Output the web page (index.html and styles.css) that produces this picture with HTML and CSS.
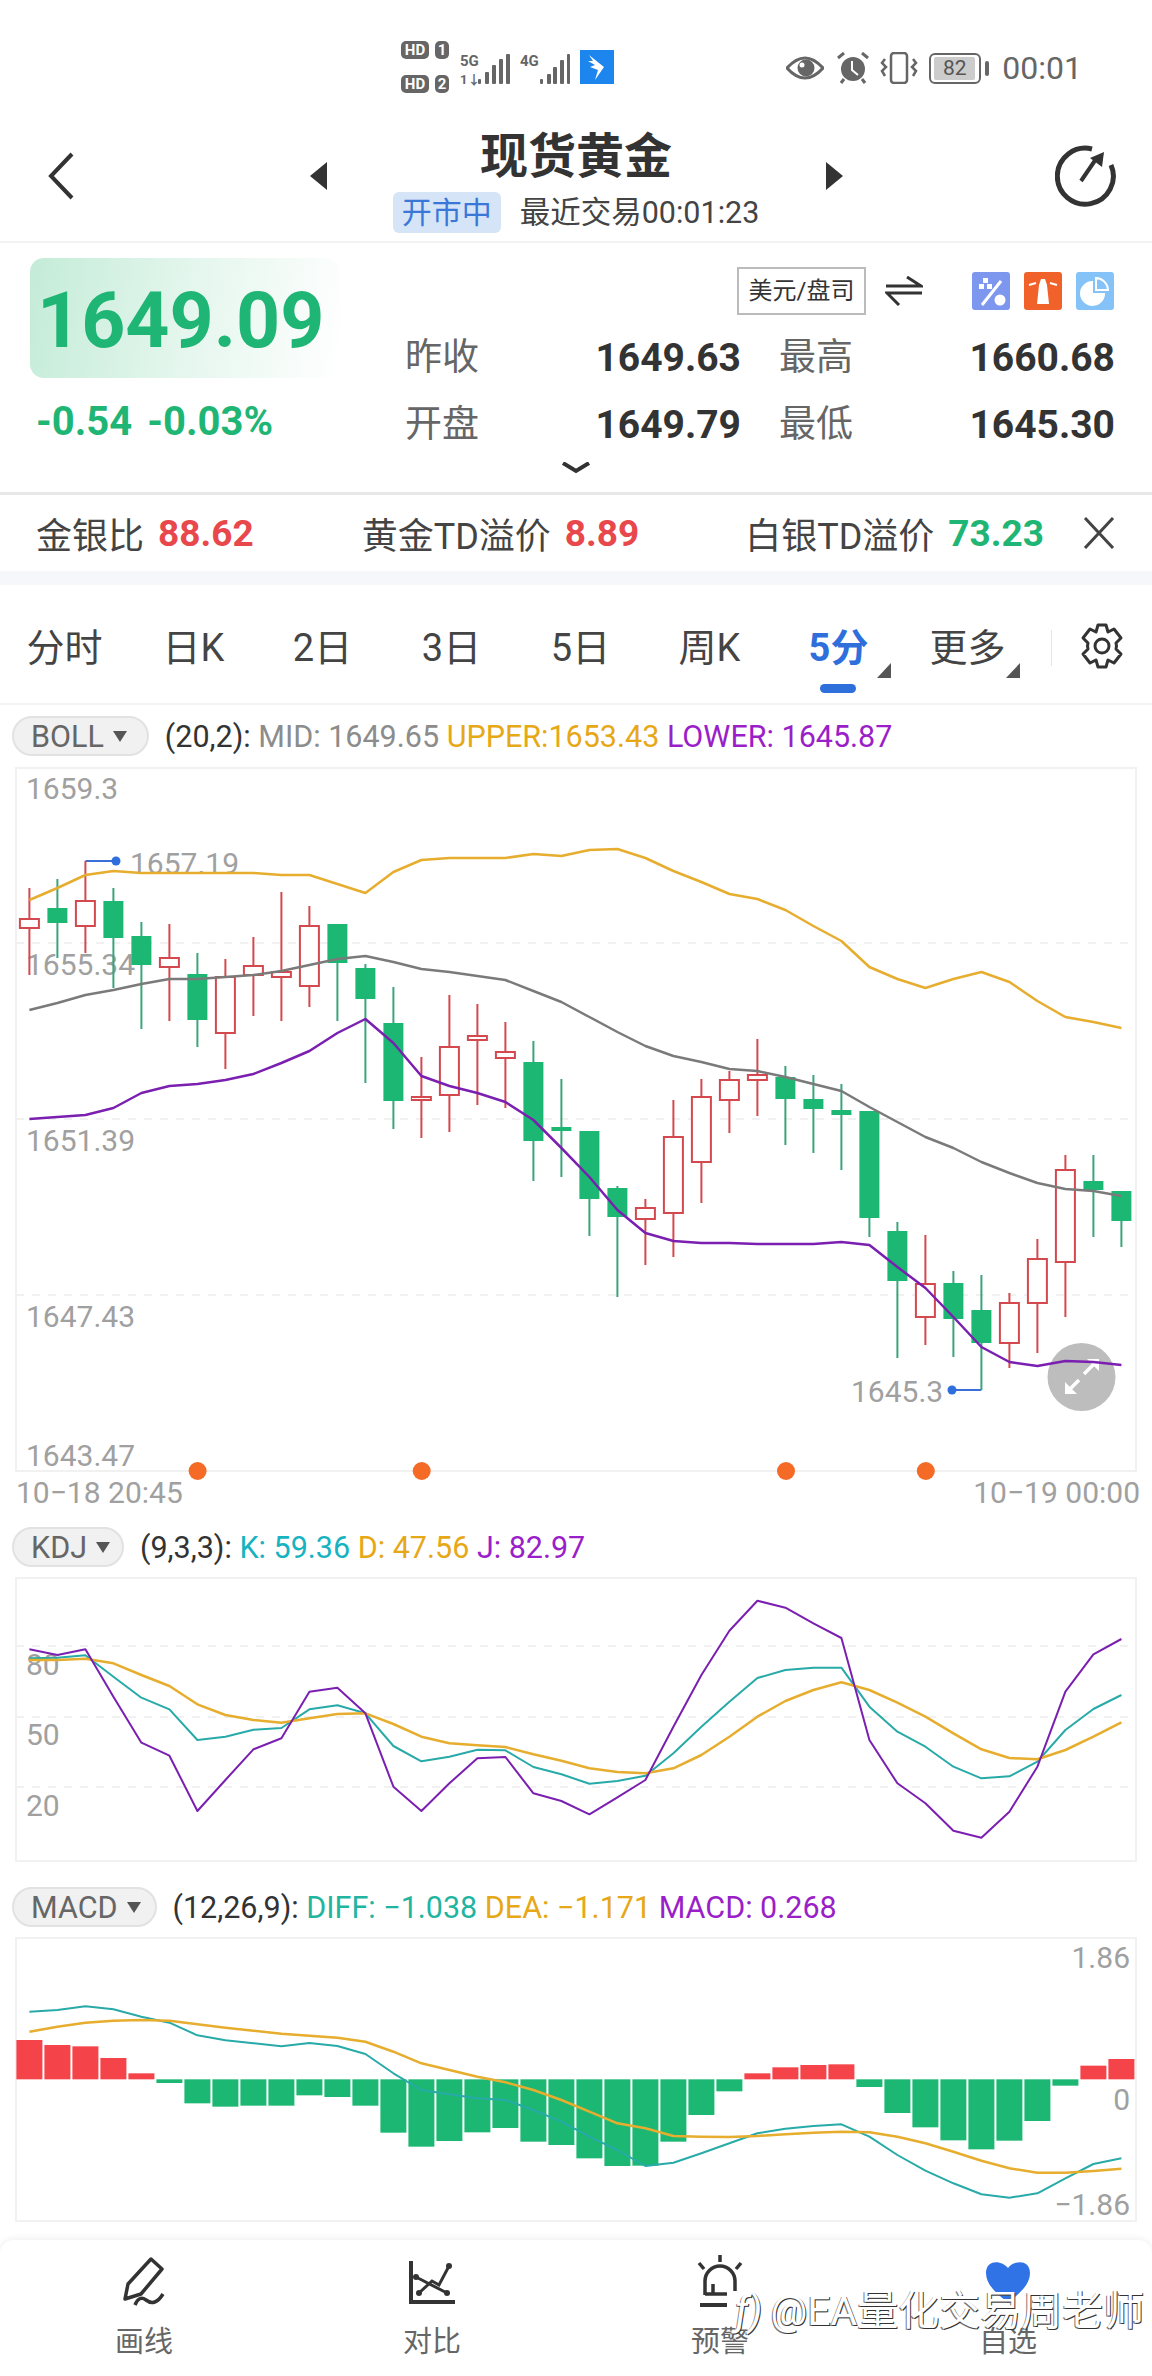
FILE: index.html
```html
<!DOCTYPE html>
<html lang="en">
<head>
    <meta charset="UTF-8">
    <meta name="viewport" content="width=device-width, initial-scale=1.0">
    <title>现货黄金</title>
    <link rel="stylesheet" href="styles.css">
</head>
<body>
    <div class="status-bar">
        <div class="status-left">
            <div class="hd-stack">
                <div class="hd"><span class="hd-box">HD</span><span class="hd-num">1</span></div>
                <div class="hd"><span class="hd-box">HD</span><span class="hd-num">2</span></div>
            </div>
            <svg class="signal" width="50" height="36" viewBox="0 0 50 36">
                <text x="0" y="14" class="signal-text">5G</text>
                <text x="0" y="32" class="signal-text signal-small">1↓</text>
                <rect x="18" y="27" width="3" height="5" rx="1"/><rect x="25" y="20" width="4" height="12" rx="1"/>
                <rect x="32" y="13" width="4" height="19" rx="1"/><rect x="39" y="7" width="4" height="25" rx="1"/><rect x="46" y="2" width="4" height="30" rx="1"/>
            </svg>
            <svg class="signal" width="50" height="36" viewBox="0 0 50 36">
                <text x="0" y="14" class="signal-text">4G</text>
                <rect x="20" y="27" width="3" height="5" rx="1"/><rect x="27" y="22" width="4" height="10" rx="1"/>
                <rect x="33" y="15" width="4" height="17" rx="1"/><rect x="40" y="8" width="4" height="24" rx="1"/><rect x="47" y="2" width="3" height="30" rx="1"/>
            </svg>
            <svg class="app-icon" width="34" height="34" viewBox="0 0 34 34">
                <rect width="34" height="34" fill="#1c86ee"/>
                <path d="M9 5 L24 17 L15 30 L18 20 L10 17 L15 15 L8 11 L13 11 Z" fill="#fff"/>
            </svg>
        </div>
        <div class="status-right">
            <svg class="eye" width="38" height="26" viewBox="0 0 38 26">
                <path d="M1 13 Q19 -7 37 13 Q19 33 1 13 Z" fill="none" stroke="#666" stroke-width="3"/>
                <circle cx="20" cy="13" r="8.5" fill="#666"/>
                <circle cx="16" cy="10" r="2.5" fill="#fff"/>
            </svg>
            <svg class="alarm" width="32" height="32" viewBox="0 0 32 32">
                <circle cx="16" cy="17" r="12" fill="#666"/>
                <path d="M15 9 V18 L21 23" fill="none" stroke="#fff" stroke-width="2"/>
                <path d="M1 6 L7 1 M25 1 L31 6 M7 27 L4 31 M25 27 L28 31" stroke="#666" stroke-width="3"/>
            </svg>
            <svg class="vibrate" width="38" height="32" viewBox="0 0 38 32">
                <rect x="11" y="1" width="16" height="30" rx="3" fill="none" stroke="#666" stroke-width="2.5"/>
                <path d="M5 7 L2 11 L6 15 L2 19 L5 24 M33 7 L36 11 L32 15 L36 19 L33 24" fill="none" stroke="#666" stroke-width="2.5"/>
            </svg>
            <div class="battery">
                <span class="battery-body"><span class="battery-level">82</span></span>
                <span class="battery-cap"></span>
            </div>
            <span class="clock">00:01</span>
        </div>
    </div>

    <header class="title-bar">
        <svg class="back" width="28" height="48" viewBox="0 0 28 48">
            <path d="M25 2 L4 24 L25 46" fill="none" stroke="#333" stroke-width="4"/>
        </svg>
        <span class="arrow-left"></span>
        <div class="title-center">
            <h1>现货黄金</h1>
            <div class="market-state">
                <span class="market-tag">开市中</span>
                <span>最近交易00:01:23</span>
            </div>
        </div>
        <span class="arrow-right"></span>
        <svg class="refresh" width="62" height="62" viewBox="0 0 62 62">
            <path d="M37 4 A28 28 0 1 0 56 20" fill="none" stroke="#333" stroke-width="5"/>
            <path d="M26 36 L41 14" stroke="#333" stroke-width="4"/>
            <path d="M35 13 L49 7 L47 22 Z" fill="#333"/>
        </svg>
    </header>

    <section class="quote">
        <div class="quote-main">
            <div class="price-col">
                <div class="price-box">1649.09</div>
                <div class="price-change"><span>-0.54</span><span>-0.03%</span></div>
            </div>
            <div class="stats-col">
                <div class="quote-tools">
                    <span class="unit">美元/盘司</span>
                    <svg class="swap" width="38" height="30" viewBox="0 0 38 30">
                        <path d="M1 10 H36 L22 1 M37 17 H2 L14 29" fill="none" stroke="#333" stroke-width="3"/>
                    </svg>
                    <svg class="tool" width="38" height="38" viewBox="0 0 38 38">
                        <rect width="38" height="38" rx="3" fill="#7d97ee"/>
                        <path d="M29 9 L10 33" stroke="#fff" stroke-width="3"/>
                        <path d="M11 6 H16 V11 H11 Z M7 12 H12 V17 H7 Z M15 12 H20 V17 H15 Z" fill="#fff"/>
                        <circle cx="28" cy="28" r="5.5" fill="#fff"/>
                    </svg>
                    <svg class="tool" width="38" height="38" viewBox="0 0 38 38">
                        <rect width="38" height="38" rx="3" fill="#f0622a"/>
                        <path d="M17 7 H21 L23 13 L25 32 H13 L15 13 Z" fill="#fff"/>
                        <path d="M5 13 L12 11 M33 13 L26 11" stroke="#fff" stroke-width="2"/>
                    </svg>
                    <svg class="tool" width="38" height="38" viewBox="0 0 38 38">
                        <rect width="38" height="38" rx="3" fill="#85c2f7"/>
                        <path d="M17 9 V21 H29 A12.5 12.5 0 1 1 17 9 Z" fill="#fff"/>
                        <path d="M20 6 A12.5 12.5 0 0 1 32 18 H20 Z" fill="none" stroke="#fff" stroke-width="2"/>
                    </svg>
                </div>
                <div class="stats">
                    <div class="stat"><span>昨收</span><b>1649.63</b></div>
                    <div class="stat"><span>最高</span><b>1660.68</b></div>
                    <div class="stat"><span>开盘</span><b>1649.79</b></div>
                    <div class="stat"><span>最低</span><b>1645.30</b></div>
                </div>
            </div>
        </div>
        <svg class="more" width="30" height="12" viewBox="0 0 30 12">
            <path d="M2 1 L15 9 L28 1" fill="none" stroke="#333" stroke-width="4"/>
        </svg>
    </section>

    <section class="ratio-row">
        <div class="ratio ratio-gold"><span>金银比</span><b class="red">88.62</b></div>
        <div class="ratio ratio-td"><span>黄金TD溢价</span><b class="red">8.89</b></div>
        <div class="ratio ratio-silver"><span>白银TD溢价</span><b class="green">73.23</b></div>
        <svg class="close" width="32" height="32" viewBox="0 0 32 32">
            <path d="M2 1 L30 31 M30 1 L2 31" stroke="#444" stroke-width="3"/>
        </svg>
    </section>

    <div class="band"></div>

    <nav class="tabs">
        <div class="tab-list">
            <a class="tab">分时</a>
            <a class="tab">日K</a>
            <a class="tab">2日</a>
            <a class="tab">3日</a>
            <a class="tab">5日</a>
            <a class="tab">周K</a>
            <a class="tab tab-active corner">5分</a>
            <a class="tab corner">更多</a>
        </div>
        <svg class="gear" width="44" height="46" viewBox="0 0 44 46">
            <path d="M18 2 H26 L28 9 L34 6 L41 15 L36 20 Q37 23 36 26 L41 31 L34 40 L28 37 L26 44 H18 L16 37 L10 40 L3 31 L8 26 Q7 23 8 20 L3 15 L10 6 L16 9 Z" fill="none" stroke="#333" stroke-width="3" stroke-linejoin="round"/>
            <circle cx="22" cy="23" r="7" fill="none" stroke="#333" stroke-width="3"/>
        </svg>
    </nav>

    <main>
        <div class="legend legend-boll">
            <span class="pill">BOLL<i></i></span>
            <span class="legend-text"><span class="dark">(20,2):</span> <span class="grey">MID: 1649.65</span> <span class="amber">UPPER:1653.43</span> <span class="purple">LOWER: 1645.87</span></span>
        </div>
        <svg id="chart-main" class="chart chart-main" viewBox="0 767 1152 706" width="1152" height="706"></svg>
        <div class="dates"><span>10−18 20:45</span><span>10−19 00:00</span></div>

        <div class="legend legend-kdj">
            <span class="pill">KDJ<i></i></span>
            <span class="legend-text"><span class="dark">(9,3,3):</span> <span class="teal">K: 59.36</span> <span class="amber">D: 47.56</span> <span class="purple">J: 82.97</span></span>
        </div>
        <svg id="chart-kdj" class="chart chart-kdj" viewBox="0 1577 1152 285" width="1152" height="285"></svg>

        <div class="legend legend-macd">
            <span class="pill">MACD<i></i></span>
            <span class="legend-text"><span class="dark">(12,26,9):</span> <span class="sea">DIFF: −1.038</span> <span class="amber">DEA: −1.171</span> <span class="purple">MACD: 0.268</span></span>
        </div>
        <svg id="chart-macd" class="chart chart-macd" viewBox="0 1937 1152 285" width="1152" height="285"></svg>
    </main>

    <footer class="bottom-nav">
        <div class="nav-item">
            <svg width="46" height="54" viewBox="0 0 46 54">
                <path d="M30 4 L41 14 L20 39 L4 44 L7 29 Z" fill="none" stroke="#333" stroke-width="3.5" stroke-linejoin="round"/>
                <path d="M14 50 Q18 40 25 45 Q34 52 42 39" fill="none" stroke="#333" stroke-width="3.5"/>
            </svg>
            <span>画线</span>
        </div>
        <div class="nav-item">
            <svg width="46" height="54" viewBox="0 0 46 54">
                <path d="M2 6 V47 H46" fill="none" stroke="#333" stroke-width="4"/>
                <path d="M7 22 L38 38 M10 38 L23 26 L30 30 L40 11" fill="none" stroke="#333" stroke-width="3"/>
                <circle cx="7" cy="22" r="3" fill="#333"/><circle cx="38" cy="38" r="3" fill="#333"/>
                <circle cx="10" cy="38" r="3" fill="#333"/><circle cx="40" cy="11" r="3" fill="#333"/>
            </svg>
            <span>对比</span>
        </div>
        <div class="nav-item">
            <svg width="46" height="54" viewBox="0 0 46 54">
                <path d="M23 0 V7 M2 8 L7 14 M44 8 L39 14" stroke="#333" stroke-width="3.5"/>
                <path d="M8 40 V26 A15 15 0 0 1 38 26 V36 M16 29 V40 M8 39 H30" fill="none" stroke="#333" stroke-width="3.5"/>
                <path d="M3 50 H30" stroke="#333" stroke-width="4"/>
            </svg>
            <span>预警</span>
        </div>
        <div class="nav-item">
            <svg width="46" height="54" viewBox="0 0 46 54">
                <path d="M23 13 C17 5 1 4 1 18 C1 32 16 41 23 48 C30 41 45 32 45 18 C45 4 29 5 23 13 Z" fill="#2f73e6"/>
            </svg>
            <span>自选</span>
        </div>
        <div class="watermark"><span class="watermark-logo">ƒ)</span>@EA量化交易周老师</div>
    </footer>

    <script src="script.js"></script>
</body>
</html>
```

FILE: styles.css
```css
/* Global styles */
html, body {
    margin: 0;
    padding: 0;
    background-color: #fff;
}

body {
    width: 1152px;
    height: 2376px;
    overflow: hidden;
    position: relative;
    font-family: Roboto, "Noto Sans CJK SC", sans-serif;
    color: #333;
}

.red { color: #e8474c; }
.green { color: #1fb574; }
.dark { color: #333; }
.grey { color: #8c8c8c; }
.amber { color: #e6a817; }
.purple { color: #9a1fc8; }
.teal { color: #17b3c0; }
.sea { color: #1fb5a0; }

/* Status bar */
.status-bar {
    height: 110px;
    box-sizing: border-box;
    display: flex;
    justify-content: space-between;
    padding: 41px 70px 0 401px;
}

.status-left {
    display: flex;
    align-items: flex-start;
    gap: 10px;
}

.signal {
    margin-top: 11px;
}

.app-icon {
    margin-top: 9px;
}

.hd-stack {
    width: 49px;
    display: flex;
    flex-direction: column;
    gap: 16px;
}

.hd {
    display: flex;
    gap: 6px;
}

.hd-box, .hd-num {
    height: 18px;
    background-color: #666;
    color: #fff;
    font-size: 15px;
    font-weight: bold;
    line-height: 18px;
    border-radius: 5px;
    text-align: center;
}

.hd-box {
    width: 28px;
}

.hd-num {
    width: 14px;
}

.signal rect {
    fill: #666;
}

.signal-text {
    font-size: 15px;
    font-weight: bold;
    fill: #666;
}

.signal-small {
    font-size: 13px;
}

.status-right {
    display: flex;
    align-items: center;
    height: 32px;
    margin-top: 11px;
}

.alarm { margin-left: 13px; }
.vibrate { margin-left: 11px; }

.battery {
    display: flex;
    align-items: center;
    gap: 4px;
    margin-left: 11px;
}

.battery-body {
    width: 52px;
    height: 31px;
    box-sizing: border-box;
    border: 2.5px solid #666;
    border-radius: 6px;
    padding: 2px 4px 2px 3px;
    display: flex;
}

.battery-level {
    flex: 1;
    background-color: #ccc;
    border-radius: 2px;
    font-size: 21px;
    line-height: 22px;
    text-align: center;
    color: #555;
}

.battery-cap {
    width: 4px;
    height: 15px;
    border-radius: 2px;
    background-color: #666;
}

.clock {
    font-size: 32px;
    color: #666;
    margin-left: 13px;
}

/* Title bar */
.title-bar {
    height: 131px;
    position: relative;
    display: flex;
    justify-content: center;
    border-bottom: 2px solid #f3f3f3;
}

.back {
    position: absolute;
    left: 47px;
    top: 42px;
}

.refresh {
    position: absolute;
    left: 1055px;
    top: 35px;
}

.arrow-left, .arrow-right {
    position: absolute;
    top: 52px;
    width: 0;
    height: 0;
    border-top: 14px solid transparent;
    border-bottom: 14px solid transparent;
}

.arrow-left {
    left: 310px;
    border-right: 17px solid #333;
}

.arrow-right {
    left: 826px;
    border-left: 17px solid #333;
}

.title-center {
    display: flex;
    flex-direction: column;
    align-items: center;
}

h1 {
    margin: 18px 0 0;
    font-size: 48px;
    line-height: 58px;
    font-weight: bold;
    color: #333;
}

.market-state {
    display: flex;
    align-items: center;
    gap: 19px;
    margin-top: 6px;
    font-size: 30.5px;
    line-height: 41px;
    color: #444;
}

.market-tag {
    background-color: #d6e4f8;
    color: #3a78d8;
    border-radius: 6px;
    padding: 0 9px;
    font-size: 30px;
}

/* Quote section */
.quote {
    height: 252px;
    box-sizing: border-box;
    border-bottom: 3px solid #e8e8e8;
    display: flex;
    flex-direction: column;
}

.quote-main {
    display: flex;
    height: 219px;
}

.price-col {
    width: 405px;
    box-sizing: border-box;
    padding: 15px 0 0 30px;
}

.price-box {
    width: 310px;
    height: 120px;
    box-sizing: border-box;
    padding-left: 7px;
    border-radius: 14px;
    background: linear-gradient(100deg, #c4ecd8 0%, #e4f6ed 50%, #fff 100%);
    color: #1fb574;
    font-size: 77px;
    font-weight: bold;
    line-height: 126px;
}

.price-change {
    display: flex;
    gap: 15px;
    margin: 21px 0 0 6px;
    font-size: 40px;
    font-weight: bold;
    line-height: 46px;
    color: #1fb574;
}

.stats-col {
    width: 710px;
    padding-top: 24px;
}

.quote-tools {
    display: flex;
    align-items: center;
    height: 48px;
    padding-left: 332px;
}

.quote-tools > * {
    flex: none;
}

.unit {
    width: 129px;
    height: 48px;
    box-sizing: border-box;
    border: 2px solid #bbb;
    font-size: 24px;
    line-height: 44px;
    text-align: center;
    color: #333;
}

.swap {
    margin: 0 49px 0 19px;
}

.tool {
    margin-right: 14px;
}

.stats {
    display: grid;
    grid-template-columns: 336px 336px;
    column-gap: 38px;
    row-gap: 21px;
    margin-top: 20px;
}

.stat {
    display: flex;
    justify-content: space-between;
    line-height: 46px;
}

.stat span {
    font-size: 37px;
    color: #666;
}

.stat b {
    font-size: 39px;
    color: #333;
}

.more {
    display: block;
    margin: 0 auto;
}

/* Ratio row */
.ratio-row {
    height: 76px;
    position: relative;
    display: flex;
    align-items: center;
    font-size: 36px;
}

.ratio {
    display: flex;
    align-items: center;
    gap: 14px;
    color: #444;
}

.ratio b {
    font-size: 37px;
}

.ratio-gold { margin-left: 36px; }
.ratio-td { margin-left: 108px; }
.ratio-silver { margin-left: 106px; }

.close {
    position: absolute;
    left: 1083px;
    top: 22px;
}

.band {
    height: 14px;
    background-color: #f5f7fa;
}

/* Period tabs */
.tabs {
    height: 120px;
    box-sizing: border-box;
    position: relative;
    border-bottom: 2px solid #f3f3f3;
}

.tab-list {
    display: grid;
    grid-template-columns: repeat(8, 129px);
    padding-top: 39px;
}

.tab {
    position: relative;
    text-align: center;
    font-size: 38px;
    line-height: 48px;
    color: #444;
}

.tab-active {
    color: #2f6fdc;
    font-weight: bold;
}

.tab-active::after {
    content: "";
    position: absolute;
    left: 46px;
    top: 60px;
    width: 36px;
    height: 9px;
    border-radius: 5px;
    background-color: #2f6fdc;
}

.corner::before {
    content: "";
    position: absolute;
    right: 12px;
    top: 39px;
    width: 0;
    height: 0;
    border-left: 14px solid transparent;
    border-bottom: 15px solid #555;
}

.gear {
    position: absolute;
    left: 1080px;
    top: 38px;
}

.tabs::after {
    content: "";
    position: absolute;
    left: 1051px;
    top: 45px;
    width: 1px;
    height: 36px;
    background-color: #e6e6e6;
}

/* Indicator headers */
.legend {
    display: flex;
    align-items: center;
    height: 40px;
    padding-left: 12px;
    gap: 16px;
}

.legend-boll { margin-top: 11px; margin-bottom: 11px; }
.legend-kdj { margin-top: 14px; margin-bottom: 10px; }
.legend-macd { margin-top: 25px; margin-bottom: 10px; }

.pill {
    height: 40px;
    box-sizing: border-box;
    display: flex;
    align-items: center;
    gap: 9px;
    padding: 0 14px 0 17px;
    border: 2px solid #e2e2e2;
    border-radius: 20px;
    background-color: #f1f1f1;
    font-size: 30.5px;
    color: #666;
}

.legend-boll .pill { padding-right: 20px; }
.legend-kdj .pill { padding-right: 12px; }

.pill i {
    width: 0;
    height: 0;
    border-left: 7px solid transparent;
    border-right: 7px solid transparent;
    border-top: 11px solid #555;
}

.legend-text {
    font-size: 30.5px;
    white-space: nowrap;
}

/* Charts */
.chart {
    display: block;
    overflow: visible;
}

.axis-label {
    font-size: 30px;
    fill: #a0a0a0;
}

.dates {
    display: flex;
    justify-content: space-between;
    padding: 0 12px 0 16px;
    font-size: 30px;
    line-height: 40px;
    color: #a0a0a0;
}

/* Bottom navigation */
.bottom-nav {
    position: absolute;
    left: 0;
    right: 0;
    top: 2240px;
    height: 136px;
    display: grid;
    grid-template-columns: repeat(4, 288px);
    background-color: #fff;
    border-radius: 14px 14px 0 0;
    box-shadow: 0 -2px 6px rgba(0, 0, 0, 0.06);
}

.nav-item {
    display: flex;
    flex-direction: column;
    align-items: center;
    padding-top: 15px;
    font-size: 29px;
    line-height: 36px;
    color: #666;
}

.nav-item svg {
    margin-bottom: 15px;
}

.watermark {
    position: absolute;
    left: 735px;
    top: 48px;
    font-size: 41px;
    line-height: 46px;
    white-space: nowrap;
    color: #fff;
    text-shadow: 1px 1px 0 #333, -1px 1px 0 #777;
}

.watermark-logo {
    font-style: italic;
    margin-right: 8px;
}
```

FILE: script.js
```js
// Colours used by all charts
const RED = '#d4494e';
const GREEN = '#1cb873';
const WICK_GREEN = '#3aa57a';
const AMBER = '#e6ad2e';
const GREY = '#7a7a7a';
const PURPLE = '#7a1fb0';
const TEAL = '#27aaa8';

// Candles: [colour, wick top, body top, body bottom, wick bottom] in page pixels
const candles = [
    ['r', 888, 919, 928, 975], ['g', 879, 908, 923, 958], ['r', 861, 901, 926, 953], ['g', 888, 901, 938, 988],
    ['g', 922, 936, 965, 1029], ['r', 924, 958, 967, 1021], ['g', 953, 974, 1020, 1047], ['r', 959, 977, 1033, 1069],
    ['r', 937, 966, 975, 1016], ['r', 892, 972, 977, 1021], ['r', 906, 926, 986, 1007], ['g', 924, 924, 963, 1021],
    ['g', 964, 968, 999, 1083], ['g', 987, 1023, 1101, 1129], ['r', 1057, 1097, 1100, 1138], ['r', 995, 1047, 1095, 1132],
    ['r', 1004, 1036, 1040, 1105], ['r', 1022, 1052, 1058, 1108], ['g', 1041, 1062, 1141, 1181], ['g', 1079, 1127, 1131, 1177],
    ['g', 1131, 1131, 1199, 1236], ['g', 1186, 1188, 1217, 1297], ['r', 1199, 1208, 1219, 1265], ['r', 1100, 1137, 1213, 1257],
    ['r', 1079, 1097, 1162, 1203], ['r', 1071, 1080, 1100, 1133], ['r', 1039, 1075, 1080, 1116], ['g', 1066, 1077, 1099, 1145],
    ['g', 1075, 1099, 1109, 1153], ['g', 1084, 1110, 1115, 1170], ['g', 1111, 1111, 1218, 1237], ['g', 1222, 1231, 1281, 1358],
    ['r', 1235, 1284, 1317, 1345], ['g', 1271, 1283, 1319, 1357], ['g', 1275, 1310, 1343, 1390], ['r', 1293, 1303, 1343, 1368],
    ['r', 1239, 1259, 1303, 1353], ['r', 1155, 1170, 1262, 1317], ['g', 1155, 1181, 1190, 1237], ['g', 1191, 1191, 1221, 1247]
];

// Bollinger lines, page y of each candle
const upper = [900, 888, 875, 871, 873, 873, 873, 873, 873, 875, 875, 884, 893, 872, 860, 858, 858, 858, 854, 856,
    850, 849, 858, 871, 882, 894, 899, 910, 926, 941, 967, 979, 988, 979, 972, 982, 1001, 1017, 1022, 1028];
const mid = [1010, 1003, 995, 990, 984, 979, 979, 977, 975, 971, 965, 959, 956, 962, 969, 972, 976, 980, 991, 1002,
    1017, 1032, 1046, 1056, 1062, 1069, 1071, 1077, 1084, 1091, 1107, 1122, 1137, 1148, 1162, 1173, 1183, 1189, 1191, 1196];
const lower = [1119, 1117, 1115, 1108, 1093, 1086, 1084, 1080, 1074, 1063, 1051, 1033, 1019, 1043, 1076, 1086, 1093, 1102, 1120, 1148,
    1177, 1210, 1233, 1241, 1243, 1243, 1244, 1244, 1244, 1242, 1245, 1267, 1288, 1317, 1347, 1362, 1366, 1361, 1362, 1365];

// KDJ lines, page y of each candle
const kdjJ = [388, 405, 388, 530, 668, 707, 873, 780, 688, 655, 515, 503, 580, 800, 873, 790, 715, 711, 820, 843,
    883, 832, 780, 620, 465, 332, 242, 263, 310, 354, 660, 790, 850, 932, 953, 875, 740, 515, 403, 357].map(v => 1520 + v / 3);
const kdjK = [415, 413, 406, 470, 533, 568, 660, 650, 629, 624, 568, 556, 580, 678, 724, 710, 689, 691, 741, 763,
    791, 783, 767, 700, 620, 545, 474, 450, 443, 443, 560, 635, 680, 740, 775, 769, 725, 630, 567, 525].map(v => 1520 + v / 3);
const kdjD = [420, 420, 416, 430, 465, 498, 553, 585, 600, 608, 595, 582, 580, 612, 650, 670, 676, 681, 703, 722,
    745, 756, 760, 745, 705, 650, 590, 543, 510, 487, 510, 548, 590, 640, 688, 714, 718, 690, 650, 607].map(v => 1520 + v / 3);

// MACD bars and lines, page y of each candle
const MACD_ZERO = 1880 + 598 / 3;
const macdBars = [480, 495, 499, 534, 580, 609, 670, 680, 677, 677, 646, 651, 677, 758, 800, 783, 757, 744, 785, 795,
    835, 858, 857, 785, 705, 634, 580, 562, 555, 553, 621, 699, 742, 781, 808, 782, 723, 617, 557, 537].map(v => 1880 + v / 3);
const macdDiff = [395, 390, 379, 388, 410, 428, 466, 481, 490, 499, 489, 498, 522, 580, 630, 643, 655, 660, 690, 725,
    770, 810, 858, 848, 820, 790, 760, 746, 738, 733, 770, 825, 872, 910, 943, 953, 940, 895, 852, 835].map(v => 1880 + v / 3);
const macdDea = [455, 440, 428, 422, 420, 422, 433, 443, 452, 461, 467, 473, 485, 515, 550, 570, 590, 607, 630, 660,
    695, 730, 745, 768, 770, 771, 768, 763, 758, 755, 757, 770, 790, 815, 842, 865, 878, 878, 873, 866].map(v => 1880 + v / 3);

// Function to get the x position of a candle
function xOf(i) {
    return 29.4 + 28 * i;
}

// Function to create an svg element
function el(parent, name, attrs, text) {
    const node = document.createElementNS('http://www.w3.org/2000/svg', name);
    for (const [key, value] of Object.entries(attrs)) {
        node.setAttribute(key, value);
    }
    if (text) node.textContent = text;
    parent.appendChild(node);
    return node;
}

function frame(svg, top, bottom) {
    el(svg, 'rect', { x: 16, y: top + 1, width: 1120, height: bottom - top - 2, fill: 'none', stroke: '#f1f1f1', 'stroke-width': 2 });
}

function gridLine(svg, y) {
    el(svg, 'line', { x1: 16, x2: 1136, y1: y, y2: y, stroke: '#f1f1f1', 'stroke-width': 2, 'stroke-dasharray': '8 8' });
}

function label(svg, x, y, text, anchor) {
    el(svg, 'text', { x: x, y: y, class: 'axis-label', 'text-anchor': anchor || 'start' }, text);
}

function line(svg, values, colour, width) {
    const points = values.map((y, i) => xOf(i).toFixed(1) + ',' + y.toFixed(1)).join(' ');
    el(svg, 'polyline', { points: points, fill: 'none', stroke: colour, 'stroke-width': width || 2, 'stroke-linejoin': 'round' });
}

// Function to draw the candle chart
function drawMain() {
    const svg = document.getElementById('chart-main');
    frame(svg, 767, 1472);
    [943, 1119, 1295].forEach(y => gridLine(svg, y));

    label(svg, 26, 799, '1659.3');
    label(svg, 26, 975, '1655.34');
    label(svg, 26, 1151, '1651.39');
    label(svg, 26, 1327, '1647.43');
    label(svg, 26, 1466, '1643.47');
    label(svg, 130, 874, '1657.19');
    label(svg, 851, 1402, '1645.3');

    // High and low markers
    el(svg, 'path', { d: 'M85.4 861 H116', fill: 'none', stroke: '#3a6fd8', 'stroke-width': 2 });
    el(svg, 'circle', { cx: 116, cy: 861, r: 4.5, fill: '#2f6fdc' });
    el(svg, 'path', { d: 'M981.4 1390 H952', fill: 'none', stroke: '#3a6fd8', 'stroke-width': 2 });
    el(svg, 'circle', { cx: 952, cy: 1390, r: 4.5, fill: '#2f6fdc' });

    candles.forEach((c, i) => {
        const x = xOf(i);
        const up = c[0] === 'r';
        el(svg, 'line', { x1: x, x2: x, y1: c[1], y2: c[4], stroke: up ? RED : WICK_GREEN, 'stroke-width': 2 });
        if (up) {
            el(svg, 'rect', { x: x - 9.5, y: c[2], width: 19, height: c[3] - c[2], fill: '#fff', stroke: RED, 'stroke-width': 2 });
        } else {
            el(svg, 'rect', { x: x - 10, y: c[2], width: 20, height: c[3] - c[2], fill: GREEN });
        }
    });

    // Expand button
    el(svg, 'circle', { cx: 1081.5, cy: 1377, r: 34, fill: '#bdbdbd' });
    el(svg, 'path', { d: 'M1068 1391 L1079 1380 M1084 1374 L1096 1362', stroke: '#fff', 'stroke-width': 3.5 });
    el(svg, 'path', { d: 'M1065 1394 V1382 L1077 1394 Z M1099 1359 V1371 L1087 1359 Z', fill: '#fff' });

    line(svg, upper, AMBER, 2.5);
    line(svg, mid, GREY, 2.5);
    line(svg, lower, PURPLE, 2.5);

    [197.6, 421.7, 786, 925.8].forEach(x => {
        el(svg, 'circle', { cx: x, cy: 1471, r: 9, fill: '#f56a25' });
    });
}

// Function to draw the KDJ chart
function drawKdj() {
    const svg = document.getElementById('chart-kdj');
    frame(svg, 1577, 1862);
    [1646, 1717, 1787].forEach(y => gridLine(svg, y));
    label(svg, 26, 1675, '80');
    label(svg, 26, 1745, '50');
    label(svg, 26, 1816, '20');
    line(svg, kdjK, TEAL);
    line(svg, kdjD, AMBER, 2.5);
    line(svg, kdjJ, PURPLE);
}

// Function to draw the MACD chart
function drawMacd() {
    const svg = document.getElementById('chart-macd');
    frame(svg, 1937, 2222);
    label(svg, 1130, 1968, '1.86', 'end');
    label(svg, 1130, 2110, '0', 'end');
    label(svg, 1130, 2215, '−1.86', 'end');
    macdBars.forEach((y, i) => {
        const up = y < MACD_ZERO;
        el(svg, 'rect', {
            x: xOf(i) - 13,
            y: Math.min(y, MACD_ZERO),
            width: 26,
            height: Math.abs(y - MACD_ZERO),
            fill: up ? '#f5434a' : GREEN
        });
    });
    line(svg, macdDiff, TEAL);
    line(svg, macdDea, AMBER, 2.5);
}

drawMain();
drawKdj();
drawMacd();
```
